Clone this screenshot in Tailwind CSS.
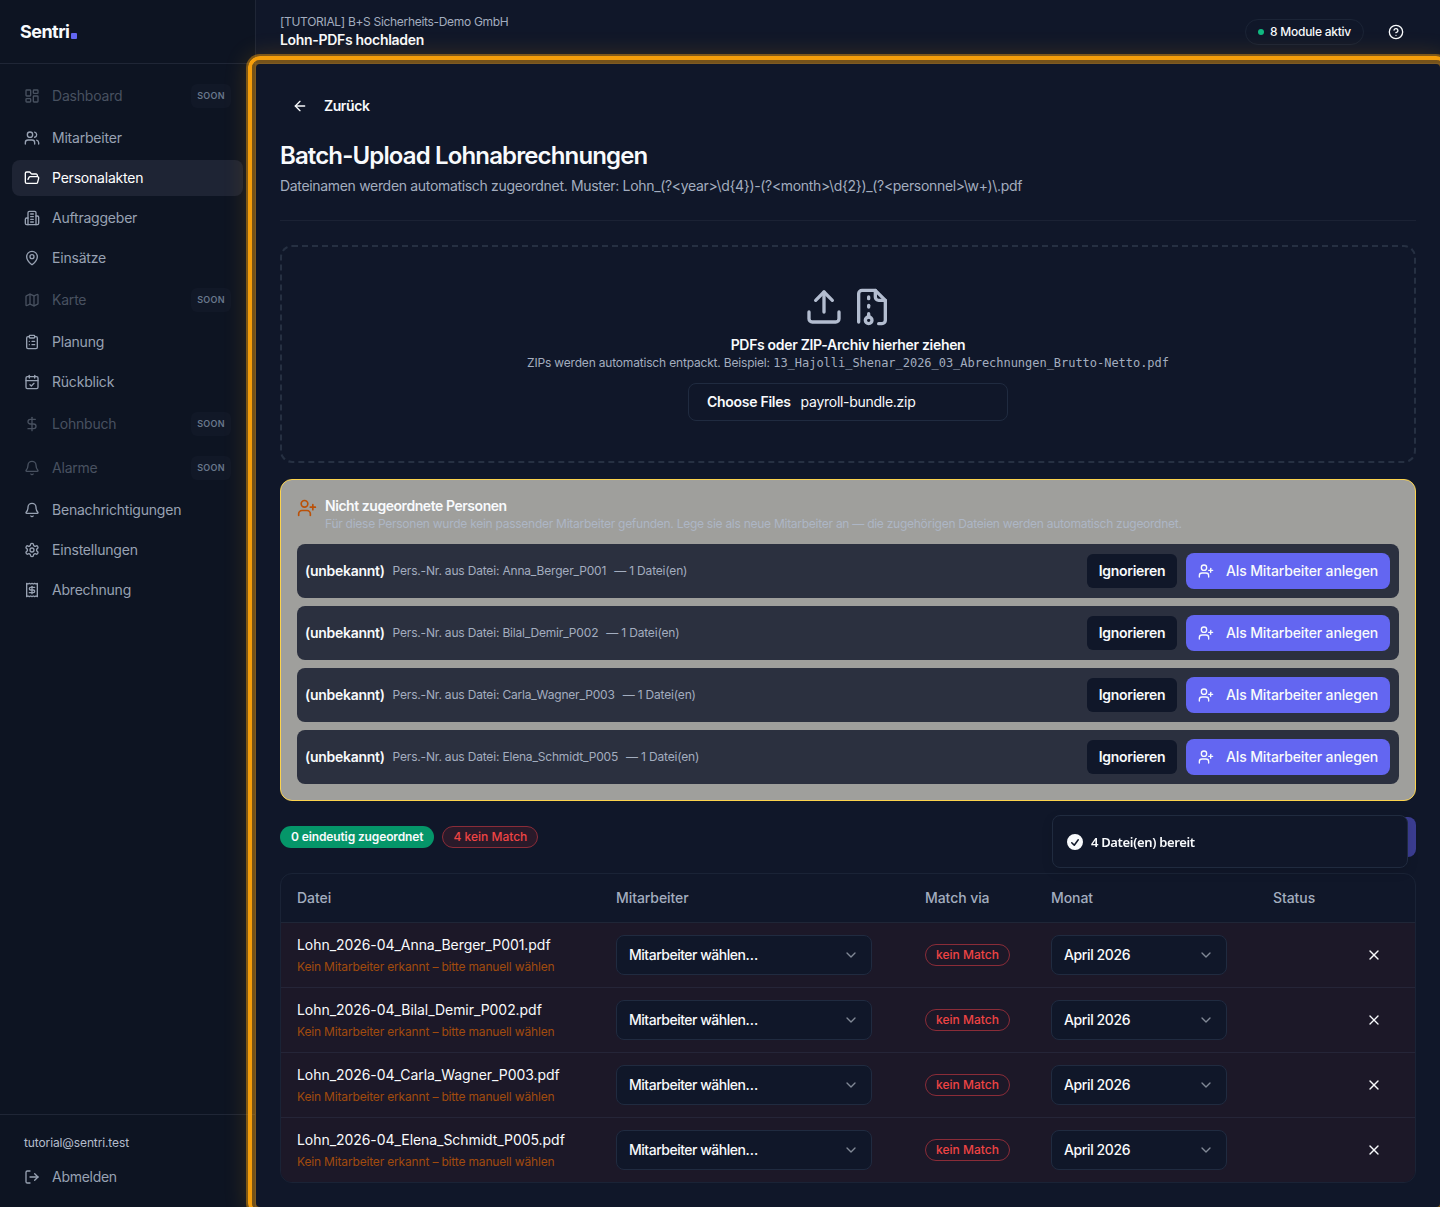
<!DOCTYPE html>
<html lang="de">
<head>
    <meta charset="UTF-8">
    <meta name="viewport" content="width=device-width, initial-scale=1.0">
    <title>Lohn-PDFs hochladen – Sentri</title>
    <script src="https://cdn.jsdelivr.net/npm/@tailwindcss/browser@4"></script>
</head>
<body class="bg-[#101729] text-[#f8fafc] text-sm font-['Inter','Liberation_Sans',sans-serif]">
    <div class="flex h-[1207px] overflow-hidden">
        <aside class="w-64 shrink-0 flex flex-col bg-[#0d1422] border-r border-[#1f2636]">
            <div class="h-16 shrink-0 flex items-center px-5 border-b border-[#1f2636]">
                <span class="text-lg font-bold tracking-[-0.03em]">Sentri</span>
                <span class="w-1.5 h-1.5 ml-0.5 mt-2 rounded-[1px] bg-[#6366f1]"></span>
            </div>
            <nav id="nav" class="flex-1 p-3 space-y-1 tracking-[-0.015em]"></nav>
            <div class="border-t border-[#1f2636] p-3">
                <div class="px-3 py-2 text-xs text-[#b4bdcc]"><span class="tracking-[-0.01em]">tutorial@sentri.test</span></div>
                <a class="flex items-center gap-3 h-9 px-3 text-[#98a2b3]">
                    <svg class="w-4 h-4" viewBox="0 0 24 24" fill="none" stroke="currentColor" stroke-width="2" stroke-linecap="round" stroke-linejoin="round"><path d="m16 17 5-5-5-5"/><path d="M21 12H9"/><path d="M9 21H5a2 2 0 0 1-2-2V5a2 2 0 0 1 2-2h4"/></svg>
                    <span class="tracking-[-0.02em]">Abmelden</span>
                </a>
            </div>
        </aside>

        <div class="flex-1 min-w-0 flex flex-col">
            <header class="h-16 shrink-0 flex items-center justify-between px-6 border-b border-[#1f2636]">
                <div>
                    <div class="text-xs text-[#a3adbf] tracking-[-0.026em]">[TUTORIAL] B+S Sicherheits-Demo GmbH</div>
                    <div class="font-semibold tracking-[-0.022em]">Lohn-PDFs hochladen</div>
                </div>
                <div class="flex items-center gap-3">
                    <div class="flex items-center gap-1.5 h-[26px] px-3 rounded-full border border-[#1b2436] text-xs font-medium">
                        <span class="w-1.5 h-1.5 rounded-full bg-[#10b981]"></span>
                        <span class="tracking-[-0.02em]">8 Module aktiv</span>
                    </div>
                    <button class="w-10 h-9 flex items-center justify-center">
                        <svg class="w-4 h-4" viewBox="0 0 24 24" fill="none" stroke="currentColor" stroke-width="2" stroke-linecap="round" stroke-linejoin="round"><circle cx="12" cy="12" r="10"/><path d="M9.09 9a3 3 0 0 1 5.83 1c0 2-3 3-3 3"/><path d="M12 17h.01"/></svg>
                    </button>
                </div>
            </header>

            <main class="flex-1 p-6">
                <button class="flex items-center gap-4 h-9 px-3 font-semibold">
                    <svg class="w-4 h-4" viewBox="0 0 24 24" fill="none" stroke="currentColor" stroke-width="2" stroke-linecap="round" stroke-linejoin="round"><path d="m12 19-7-7 7-7"/><path d="M19 12H5"/></svg>
                    <span class="tracking-[-0.03em]">Zurück</span>
                </button>

                <div class="mt-4 pb-6 border-b border-[#1b2234]">
                    <h1 class="text-2xl leading-8 font-semibold tracking-[-0.036em]">Batch-Upload Lohnabrechnungen</h1>
                    <p class="mt-1 text-[#a3adbf] tracking-[-0.023em]">Dateinamen werden automatisch zugeordnet. Muster: Lohn_(?&lt;year&gt;\d{4})-(?&lt;month&gt;\d{2})_(?&lt;personnel&gt;\w+)\.pdf</p>
                </div>

                <!-- Upload -->
                <div class="mt-6 flex flex-col items-center p-10 rounded-xl border-2 border-dashed border-[#263042]">
                    <div class="flex gap-2 text-[#b3bdd0]">
                        <svg class="w-10 h-10" viewBox="0 0 24 24" fill="none" stroke="currentColor" stroke-width="2" stroke-linecap="round" stroke-linejoin="round"><path d="M12 3v12"/><path d="m17 8-5-5-5 5"/><path d="M21 15v4a2 2 0 0 1-2 2H5a2 2 0 0 1-2-2v-4"/></svg>
                        <svg class="w-10 h-10" viewBox="0 0 24 24" fill="none" stroke="currentColor" stroke-width="2" stroke-linecap="round" stroke-linejoin="round"><path d="M4 21V4a2 2 0 0 1 2-2h8l6 6v12a2 2 0 0 1-2 2h-2"/><path d="M14 2v4a2 2 0 0 0 2 2h4"/><path d="M10 7V6"/><path d="M10 12v-1"/><path d="M10 18v-2"/><circle cx="10" cy="20" r="2"/></svg>
                    </div>
                    <p class="mt-2 font-semibold tracking-[-0.023em]">PDFs oder ZIP-Archiv hierher ziehen</p>
                    <p class="h-4 text-xs text-[#a3adbf]"><span class="tracking-[-0.015em]">ZIPs werden automatisch entpackt. Beispiel:</span> <span class="font-['DejaVu_Sans_Mono',monospace] leading-none tracking-[-0.03px]">13_Hajolli_Shenar_2026_03_Abrechnungen_Brutto-Netto.pdf</span></p>
                    <div class="mt-3 w-80 h-[38px] px-[18px] flex items-center rounded-lg border border-[#202b40] tracking-[-0.02em]">
                        <span class="font-semibold mr-2.5">Choose Files</span>
                        <span>payroll-bundle.zip</span>
                    </div>
                </div>

                <!-- Personen ohne Treffer -->
                <div class="mt-4 p-4 rounded-xl border border-[#fcd34d] bg-[#9f9f9c]">
                    <div class="flex gap-2 mb-3">
                        <svg class="w-5 h-5 mt-0.5 text-[#bb5108]" viewBox="0 0 24 24" fill="none" stroke="currentColor" stroke-width="2" stroke-linecap="round" stroke-linejoin="round"><path d="M16 21v-2a4 4 0 0 0-4-4H6a4 4 0 0 0-4 4v2"/><circle cx="9" cy="7" r="4"/><path d="M19 8v6"/><path d="M22 11h-6"/></svg>
                        <div>
                            <div class="font-semibold tracking-[-0.032em]">Nicht zugeordnete Personen</div>
                            <div class="text-xs text-[#adb6c5] tracking-[-0.022em]">Für diese Personen wurde kein passender Mitarbeiter gefunden. Lege sie als neue Mitarbeiter an — die zugehörigen Dateien werden automatisch zugeordnet.</div>
                        </div>
                    </div>
                    <div id="persons" class="space-y-2"></div>
                </div>

                <div class="mt-4 h-10 flex items-center gap-2 text-xs font-semibold">
                    <span class="h-[22px] px-[11px] flex items-center rounded-full bg-[#059669]"><span class="tracking-[-0.01em]">0 eindeutig zugeordnet</span></span>
                    <span class="h-[22px] px-2.5 flex items-center rounded-full border border-[#8a2c38] bg-[#2a1a2a] text-[#ef4444] font-medium">4 kein Match</span>
                    <button class="ml-auto w-44 h-10 rounded-lg bg-[#3b3d91]"></button>
                </div>

                <div class="mt-4 rounded-xl border border-[#1a2336] overflow-hidden">
                    <table class="w-full table-fixed text-left">
                        <thead>
                            <tr class="h-12 border-b border-[#1f2637] text-[#a3adbf] tracking-[-0.005em]">
                                <th class="w-[319px] px-4 font-medium">Datei</th>
                                <th class="w-[309px] px-4 font-medium">Mitarbeiter</th>
                                <th class="w-[126px] px-4 font-medium">Match via</th>
                                <th class="w-[222px] px-4 font-medium">Monat</th>
                                <th class="w-[76px] px-4 font-medium">Status</th>
                                <th></th>
                            </tr>
                        </thead>
                        <tbody id="files"></tbody>
                    </table>
                </div>
            </main>
        </div>
    </div>

    <!-- Tutorial-Rahmen um den Inhaltsbereich -->
    <div class="fixed left-[248px] top-14 w-[1200px] h-[1159px] rounded-xl border-4 border-[#f59e0b] pointer-events-none shadow-[0_0_0_2px_rgba(245,158,11,0.45),0_0_24px_rgba(245,158,11,0.2),inset_0_0_0_4px_rgba(245,158,11,0.45)]"></div>

    <!-- Toast -->
    <div class="fixed left-[1052px] top-[815px] w-[356px] h-[53px] flex items-center gap-1.5 px-3 rounded-lg border border-[#202b3f] bg-[#101729] shadow-[0_4px_12px_rgba(0,0,0,0.1)] text-[13px] font-semibold font-['Noto_Sans',sans-serif]">
        <svg class="w-5 h-5" viewBox="0 0 20 20" fill="currentColor"><path fill-rule="evenodd" d="M10 18a8 8 0 1 0 0-16 8 8 0 0 0 0 16Zm3.857-9.809a.75.75 0 0 0-1.214-.882l-3.483 4.79-1.88-1.88a.75.75 0 1 0-1.06 1.061l2.5 2.5a.75.75 0 0 0 1.137-.089l4-5.5Z" clip-rule="evenodd"/></svg>
        <span class="pt-0.5 tracking-[-0.026em]">4 Datei(en) bereit</span>
    </div>

    <script>
        const icons = {
            dashboard: '<rect width="7" height="9" x="3" y="3" rx="1"/><rect width="7" height="5" x="14" y="3" rx="1"/><rect width="7" height="9" x="14" y="12" rx="1"/><rect width="7" height="5" x="3" y="16" rx="1"/>',
            users: '<path d="M16 21v-2a4 4 0 0 0-4-4H6a4 4 0 0 0-4 4v2"/><circle cx="9" cy="7" r="4"/><path d="M22 21v-2a4 4 0 0 0-3-3.87"/><path d="M16 3.13a4 4 0 0 1 0 7.75"/>',
            folder: '<path d="m6 14 1.5-2.9A2 2 0 0 1 9.24 10H20a2 2 0 0 1 1.94 2.5l-1.54 6a2 2 0 0 1-1.95 1.5H4a2 2 0 0 1-2-2V5a2 2 0 0 1 2-2h3.9a2 2 0 0 1 1.69.9l.81 1.2a2 2 0 0 0 1.67.9H18a2 2 0 0 1 2 2v2"/>',
            building: '<path d="M6 22V4a2 2 0 0 1 2-2h8a2 2 0 0 1 2 2v18Z"/><path d="M6 12H4a2 2 0 0 0-2 2v6a2 2 0 0 0 2 2h2"/><path d="M18 9h2a2 2 0 0 1 2 2v9a2 2 0 0 1-2 2h-2"/><path d="M10 6h4"/><path d="M10 10h4"/><path d="M10 14h4"/><path d="M10 18h4"/>',
            pin: '<path d="M20 10c0 4.993-5.539 10.193-7.399 11.799a1 1 0 0 1-1.202 0C9.539 20.193 4 14.993 4 10a8 8 0 0 1 16 0"/><circle cx="12" cy="10" r="3"/>',
            map: '<path d="M14.106 5.553a2 2 0 0 0 1.788 0l3.659-1.83A1 1 0 0 1 21 4.619v12.764a1 1 0 0 1-.553.894l-4.553 2.277a2 2 0 0 1-1.788 0l-4.212-2.106a2 2 0 0 0-1.788 0l-3.659 1.83A1 1 0 0 1 3 19.381V6.618a1 1 0 0 1 .553-.894l4.553-2.277a2 2 0 0 1 1.788 0z"/><path d="M15 5.764v15"/><path d="M9 3.236v15"/>',
            clipboard: '<rect width="8" height="4" x="8" y="2" rx="1" ry="1"/><path d="M16 4h2a2 2 0 0 1 2 2v14a2 2 0 0 1-2 2H6a2 2 0 0 1-2-2V6a2 2 0 0 1 2-2h2"/><path d="M12 11h4"/><path d="M12 16h4"/><path d="M8 11h.01"/><path d="M8 16h.01"/>',
            calendar: '<path d="M8 2v4"/><path d="M16 2v4"/><rect width="18" height="18" x="3" y="4" rx="2"/><path d="M3 10h18"/><path d="m9 16 2 2 4-4"/>',
            dollar: '<path d="M12 2v20"/><path d="M17 5H9.5a3.5 3.5 0 0 0 0 7h5a3.5 3.5 0 0 1 0 7H6"/>',
            bell: '<path d="M10.268 21a2 2 0 0 0 3.464 0"/><path d="M3.262 15.326A1 1 0 0 0 4 17h16a1 1 0 0 0 .74-1.673C19.41 13.956 18 12.499 18 8A6 6 0 0 0 6 8c0 4.499-1.411 5.956-2.738 7.326"/>',
            settings: '<path d="M12.22 2h-.44a2 2 0 0 0-2 2v.18a2 2 0 0 1-1 1.73l-.43.25a2 2 0 0 1-2 0l-.15-.08a2 2 0 0 0-2.73.73l-.22.38a2 2 0 0 0 .73 2.73l.15.1a2 2 0 0 1 1 1.72v.51a2 2 0 0 1-1 1.74l-.15.09a2 2 0 0 0-.73 2.73l.22.38a2 2 0 0 0 2.73.73l.15-.08a2 2 0 0 1 2 0l.43.25a2 2 0 0 1 1 1.73V20a2 2 0 0 0 2 2h.44a2 2 0 0 0 2-2v-.18a2 2 0 0 1 1-1.73l.43-.25a2 2 0 0 1 2 0l.15.08a2 2 0 0 0 2.73-.73l.22-.39a2 2 0 0 0-.73-2.73l-.15-.08a2 2 0 0 1-1-1.74v-.5a2 2 0 0 1 1-1.74l.15-.09a2 2 0 0 0 .73-2.73l-.22-.38a2 2 0 0 0-2.73-.73l-.15.08a2 2 0 0 1-2 0l-.43-.25a2 2 0 0 1-1-1.73V4a2 2 0 0 0-2-2z"/><circle cx="12" cy="12" r="3"/>',
            receipt: '<path d="M4 2v20l2-1 2 1 2-1 2 1 2-1 2 1 2-1 2 1V2l-2 1-2-1-2 1-2-1-2 1-2-1-2 1Z"/><path d="M16 8h-6a2 2 0 1 0 0 4h4a2 2 0 1 1 0 4H8"/><path d="M12 17.5v-11"/>',
            userPlus: '<path d="M16 21v-2a4 4 0 0 0-4-4H6a4 4 0 0 0-4 4v2"/><circle cx="9" cy="7" r="4"/><path d="M19 8v6"/><path d="M22 11h-6"/>',
            chevron: '<path d="m6 9 6 6 6-6"/>',
            x: '<path d="M18 6 6 18"/><path d="m6 6 12 12"/>'
        };

        function icon(name) {
            return `<svg class="w-4 h-4 shrink-0" viewBox="0 0 24 24" fill="none" stroke="currentColor" stroke-width="2" stroke-linecap="round" stroke-linejoin="round">${icons[name]}</svg>`;
        }

        const navItems = [
            ['dashboard', 'Dashboard', 'soon'],
            ['users', 'Mitarbeiter'],
            ['folder', 'Personalakten', 'active'],
            ['building', 'Auftraggeber'],
            ['pin', 'Einsätze'],
            ['map', 'Karte', 'soon'],
            ['clipboard', 'Planung'],
            ['calendar', 'Rückblick'],
            ['dollar', 'Lohnbuch', 'soon'],
            ['bell', 'Alarme', 'soon'],
            ['bell', 'Benachrichtigungen'],
            ['settings', 'Einstellungen'],
            ['receipt', 'Abrechnung']
        ];

        const navClass = {
            soon: 'flex items-center gap-3 px-3 h-10 text-[#485160]',
            active: 'flex items-center gap-3 px-3 h-9 rounded-lg bg-[#1e2434] text-white',
            normal: 'flex items-center gap-3 px-3 h-9 text-[#98a2b3]'
        };

        document.getElementById('nav').innerHTML = navItems.map(([ico, label, state]) => `
            <a class="${navClass[state || 'normal']}">
                ${icon(ico)}
                <span>${label}</span>
                ${state === 'soon' ? '<span class="ml-auto w-10 h-6 flex items-center justify-center rounded-md bg-[#111827] text-[9px] font-semibold tracking-[0.03em] text-[#68778b]">SOON</span>' : ''}
            </a>
        `).join('');

        const people = ['Anna_Berger_P001', 'Bilal_Demir_P002', 'Carla_Wagner_P003', 'Elena_Schmidt_P005'];

        document.getElementById('persons').innerHTML = people.map(p => `
            <div class="flex items-center h-[54px] pl-2 pr-[9px] gap-2 rounded-lg bg-[#2b303f]">
                <span class="font-semibold tracking-[-0.02em]">(unbekannt)</span>
                <span class="text-xs text-[#a3adbf] tracking-[-0.015em]">Pers.-Nr. aus Datei: ${p}</span>
                <span class="text-xs text-[#a3adbf] tracking-[-0.015em]">— 1 Datei(en)</span>
                <button class="ml-auto mr-px w-[90px] h-[34px] rounded-md bg-[#101729] font-semibold tracking-[-0.02em]">Ignorieren</button>
                <button class="w-[204px] h-9 px-3 flex items-center gap-3 rounded-lg bg-[#6366f1] font-medium">
                    ${icon('userPlus')}
                    <span class="whitespace-nowrap tracking-[-0.01em]">Als Mitarbeiter anlegen</span>
                </button>
            </div>
        `).join('');

        document.getElementById('files').innerHTML = people.map(p => `
            <tr class="h-[65px] border-b border-[#252538] last:border-0 bg-[#1c1828]">
                <td class="px-4">
                    <div class="whitespace-nowrap tracking-[-0.004em]">Lohn_2026-04_${p}.pdf</div>
                    <div class="mt-1 text-xs leading-4 text-[#a14b0e] tracking-[-0.014em]">Kein Mitarbeiter erkannt – bitte manuell wählen</div>
                </td>
                <td class="px-4">
                    <div class="w-64 h-10 px-3 flex items-center justify-between rounded-lg border border-[#202b40] bg-[#101729] font-medium">
                        <span class="tracking-[-0.035em]">Mitarbeiter wählen…</span>
                        <span class="text-[#818896]">${icon('chevron')}</span>
                    </div>
                </td>
                <td class="px-4">
                    <span class="w-[85px] h-[22px] flex items-center justify-center rounded-full border border-[#8a2c38] text-xs font-medium text-[#ef4444] whitespace-nowrap">kein Match</span>
                </td>
                <td class="px-4">
                    <div class="w-44 h-10 px-3 flex items-center justify-between rounded-lg border border-[#202b40] bg-[#101729] font-medium">
                        <span class="tracking-[-0.028em]">April 2026</span>
                        <span class="text-[#818896]">${icon('chevron')}</span>
                    </div>
                </td>
                <td></td>
                <td>
                    <div class="flex justify-center">${icon('x')}</div>
                </td>
            </tr>
        `).join('');
    </script>
</body>
</html>
